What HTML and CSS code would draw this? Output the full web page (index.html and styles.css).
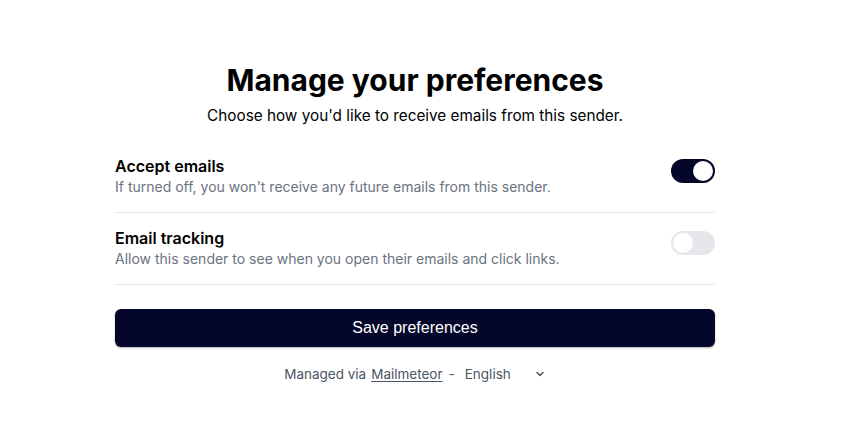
FILE: index.html
```html
<!DOCTYPE html>
<html lang="en">
<head>
<meta charset="utf-8">
<title>Manage your preferences</title>
<link rel="stylesheet" href="styles.css">
</head>
<body>
<div class="page">
  <main class="card">
    <h1 class="title">Manage your preferences</h1>
    <p class="subtitle">Choose how you'd like to receive emails from this sender.</p>
    <ul class="prefs">
      <li class="pref">
        <div class="pref-text">
          <div class="pref-name">Accept emails</div>
          <div class="pref-desc">If turned off, you won't receive any future emails from this sender.</div>
        </div>
        <span class="toggle on"><span class="knob"></span></span>
      </li>
      <li class="pref">
        <div class="pref-text">
          <div class="pref-name">Email tracking</div>
          <div class="pref-desc">Allow this sender to see when you open their emails and click links.</div>
        </div>
        <span class="toggle"><span class="knob"></span></span>
      </li>
    </ul>
    <button class="save">Save preferences</button>
    <footer class="footer">
      <span>Managed via</span>
      <a class="brand" href="#">Mailmeteor</a>
      <span class="dash">-</span>
      <span class="lang">English
        <svg class="chev" width="12" height="12" viewBox="0 0 12 12"><path d="M3 4.5 L6 7.5 L9 4.5" fill="none" stroke="#4b5563" stroke-width="1.5" stroke-linecap="round" stroke-linejoin="round"/></svg>
      </span>
    </footer>
  </main>
</div>
</body>
</html>
```
FILE: styles.css
```css
* { box-sizing: border-box; }
html, body { margin: 0; padding: 0; background: #fff; }
body {
  font-family: Inter, "Liberation Sans", Arial, sans-serif;
  color: #000;
}
.page {
  width: 830px;
  padding-top: 61px;
}
.card {
  width: 600px;
  margin: 0 auto;
  display: flex;
  flex-direction: column;
}
.title {
  margin: 0;
  text-align: center;
  font-size: 30px;
  line-height: 38px;
  font-weight: 700;
}
.subtitle {
  margin: 5px 0 0;
  text-align: center;
  font-size: 15.3px;
  line-height: 24px;
}
.prefs {
  list-style: none;
  margin: 27px 0 0;
  padding: 0;
}
.pref {
  display: flex;
  align-items: flex-start;
  justify-content: space-between;
  padding: 14px 0 15px;
  border-bottom: 1px solid #e5e7eb;
}
.pref:first-child { padding-top: 0; }
.pref-text { display: flex; flex-direction: column; }
.pref-name {
  font-size: 16px;
  line-height: 22px;
  font-weight: 600;
}
.pref-desc {
  font-size: 14px;
  line-height: 20px;
  color: #6b7280;
}
.toggle {
  margin-top: 4px;
  width: 44px;
  height: 24px;
  border-radius: 12px;
  background: #e5e7eb;
  padding: 2px;
  display: flex;
  flex-shrink: 0;
}
.toggle.on { background: #04072a; justify-content: flex-end; }
.knob {
  width: 20px;
  height: 20px;
  border-radius: 50%;
  background: #fff;
}
.save {
  margin-top: 24px;
  height: 38px;
  width: 100%;
  border: none;
  border-radius: 6px;
  background: #04072a;
  color: #fff;
  font-family: "Liberation Sans", Arial, sans-serif;
  font-size: 16px;
  box-shadow: 0 1px 2px rgba(0,0,0,0.3);
}
.footer {
  margin-top: 17px;
  display: flex;
  justify-content: center;
  align-items: center;
  font-size: 13.5px;
  line-height: 20px;
  color: #4b5563;
}
.brand { color: #4b5563; margin-left: 5px; text-decoration: underline; text-underline-offset: 2px; }
.dash { margin-left: 6px; }
.lang { margin-left: 10px; display: inline-flex; align-items: center; }
.chev { margin-left: 23px; }
```
